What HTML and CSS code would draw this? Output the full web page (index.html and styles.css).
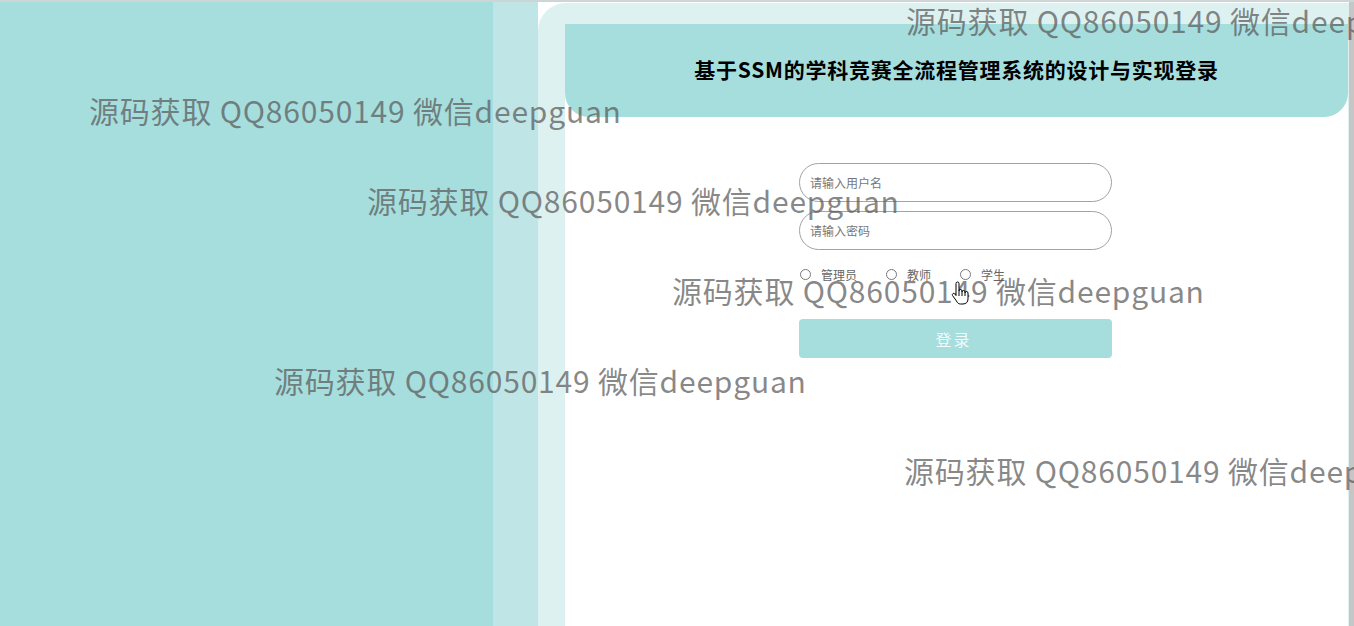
FILE: index.html
```html
<!DOCTYPE html>
<html lang="zh-CN">
<head>
<meta charset="utf-8">
<title>登录</title>
<link rel="stylesheet" href="styles.css">
</head>
<body>
<div class="page">
  <div class="band band-a"></div>
  <div class="band band-b"></div>
  <div class="panel">
    <div class="card">
      <div class="header">
        <h1 class="title">基于SSM的学科竞赛全流程管理系统的设计与实现登录</h1>
      </div>
      <form class="form">
        <input class="field" type="text" placeholder="请输入用户名">
        <input class="field" type="password" placeholder="请输入密码">
        <div class="roles">
          <label class="role"><input class="radio" type="radio" name="role"><span>管理员</span></label>
          <label class="role"><input class="radio" type="radio" name="role"><span>教师</span></label>
          <label class="role"><input class="radio" type="radio" name="role"><span>学生</span></label>
        </div>
        <button class="btn" type="button">登录</button>
      </form>
    </div>
  </div>
  <div class="scrollbar"></div>

  <div class="wm wm1">源码获取 QQ86050149 微信deepguan</div>
  <div class="wm wm2">源码获取 QQ86050149 微信deepguan</div>
  <div class="wm wm3">源码获取 QQ86050149 微信deepguan</div>
  <div class="wm wm4">源码获取 QQ86050149 微信deepguan</div>
  <div class="wm wm5">源码获取 QQ86050149 微信deepguan</div>
  <div class="wm wm6">源码获取 QQ86050149 微信deepguan</div>

  <svg class="cursor" width="18" height="24" viewBox="0 0 18 24">
    <path d="M5,2.5 a1.5,1.5 0 0 1 3,0 V10 a1.5,1.5 0 0 1 3,0 V11 a1.5,1.5 0 0 1 3,0 V12 a1.5,1.5 0 0 1 3,0 V18 c0,3 -2,5 -5,5 H9.5 c-2,0 -3,-1 -4,-3 L1.5,14.5 a1.4,1.4 0 0 1 2.2,-1.7 L5,14.5 Z" fill="#fff" stroke="#000" stroke-width="1"/>
    <path d="M8,10 V15 M11,11 V15 M14,12 V15" stroke="#000" stroke-width="1" fill="none"/>
  </svg>
</div>
</body>
</html>
```

FILE: styles.css
```css
* { box-sizing: border-box; }
html, body { margin: 0; padding: 0; }
body {
  font-family: "Noto Sans CJK SC", "Noto Sans", sans-serif;
  background: #ffffff;
  overflow: hidden;
}
.page {
  position: relative;
  display: flex;
  width: 1354px;
  height: 626px;
  overflow: hidden;
  border-top: 2px solid #cdd6d6;
  background: #ffffff;
}
.band { height: 100%; }
.band-a { width: 493px; background: #a6dddd; }
.band-b { width: 45px; background: #c0e5e6; }
.panel {
  flex: 1;
  margin-top: 1px;
  background: #ddf1f0;
  border-top-left-radius: 28px;
  padding: 21px 1px 0 27px;
  display: flex;
}
.card {
  flex: 1;
  background: #ffffff;
  display: flex;
  flex-direction: column;
  align-items: center;
}
.header {
  align-self: stretch;
  height: 93px;
  padding-bottom: 4px;
  background: #a6dddd;
  border-radius: 0 0 24px 24px;
  display: flex;
  align-items: center;
  justify-content: center;
}
.title {
  margin: 0;
  font-size: 21px;
  font-weight: 700;
  color: #000;
  letter-spacing: 0.75px;
}
.form {
  width: 313px;
  margin-top: 46px;
  margin-right: 2px;
  display: flex;
  flex-direction: column;
}
.field {
  height: 39px;
  border: 1px solid #a3a3a3;
  border-radius: 20px;
  padding: 0 10px;
  font-family: inherit;
  font-size: 12px;
  color: #333;
  outline: none;
  background: #fff;
}
.field + .field { margin-top: 9px; }
.field::placeholder { color: #777; }
.roles {
  display: flex;
  align-items: center;
  gap: 29px;
  margin-top: 17px;
  height: 14px;
  padding-left: 1px;
}
.role {
  display: flex;
  align-items: center;
  font-size: 12px;
  color: #666;
}
.radio {
  appearance: none;
  -webkit-appearance: none;
  width: 11px;
  height: 11px;
  margin: 0 10px 0 0;
  border: 1px solid #777;
  border-radius: 50%;
  background: #fff;
}
.btn {
  margin-top: 38px;
  height: 39px;
  border: none;
  border-radius: 4px;
  background: #a6dddd;
  color: #f2fafa;
  font-family: inherit;
  font-size: 16px;
  letter-spacing: 2px;
  padding-left: 2px;
}
.scrollbar {
  width: 5px;
  height: 100%;
  background: #c6c6c6;
}
.wm {
  position: absolute;
  white-space: nowrap;
  font-family: "Noto Sans CJK SC", sans-serif;
  font-size: 30px;
  line-height: 32px;
  letter-spacing: 0.8px;
  color: rgba(90, 90, 90, 0.72);
  pointer-events: none;
}
.wm1 { left: 906px; top: 2px; }
.wm2 { left: 89px; top: 92px; }
.wm3 { left: 367px; top: 182px; }
.wm4 { left: 672px; top: 272px; }
.wm5 { left: 274px; top: 362px; }
.wm6 { left: 904px; top: 452px; }
.cursor {
  position: absolute;
  left: 951px;
  top: 279px;
}
```
